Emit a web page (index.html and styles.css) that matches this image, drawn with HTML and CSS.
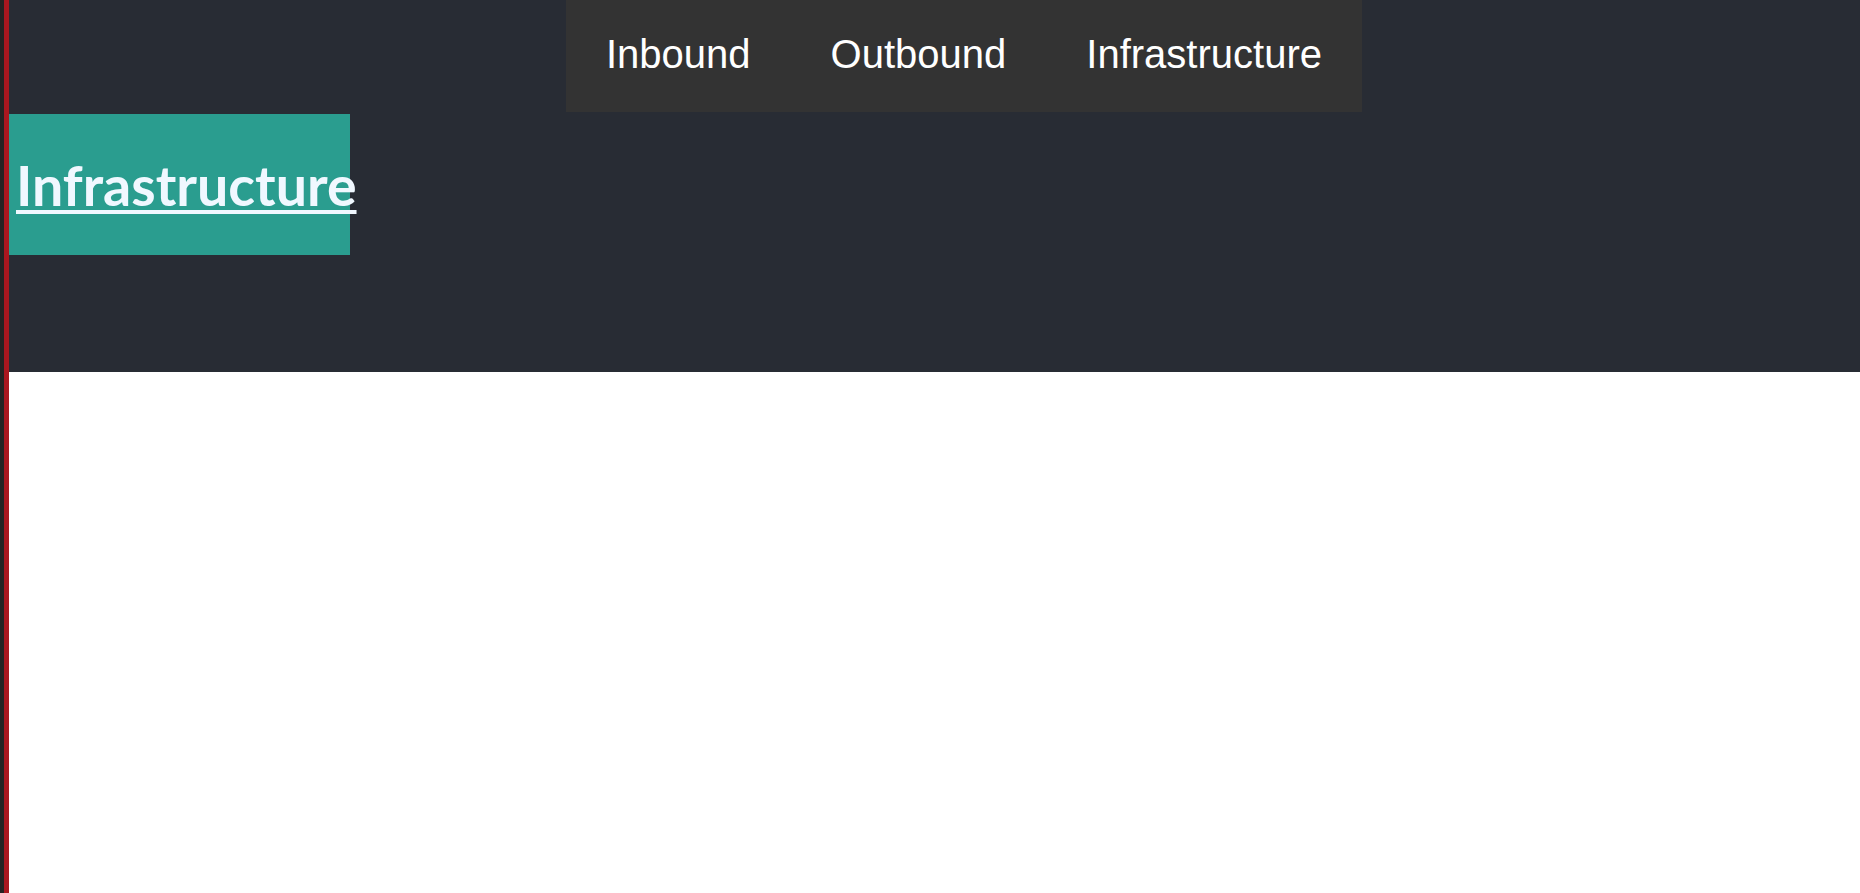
FILE: index.html
```html
<!DOCTYPE html>
<html lang="en">
<head>
<meta charset="utf-8">
<title>Infrastructure</title>
<link rel="stylesheet" href="styles.css">
</head>
<body>
<div class="frame">
  <div class="edge"></div>
  <div class="app">
    <header class="app-header">
      <nav class="topnav">
        <a class="topnav-link" href="#">Inbound</a>
        <a class="topnav-link" href="#">Outbound</a>
        <a class="topnav-link" href="#">Infrastructure</a>
      </nav>
      <div class="page-tag">
        <a class="page-title" href="#">Infrastructure</a>
      </div>
    </header>
    <main class="app-body"></main>
  </div>
</div>
</body>
</html>
```

FILE: styles.css
```css
html, body {
  margin: 0;
  padding: 0;
  height: 100%;
  background: #ffffff;
}

.frame {
  display: flex;
  min-height: 100vh;
}

.edge {
  width: 4px;
  flex: none;
  background: #232323;
  border-right: 5px solid #a9171f;
}

.app {
  flex: 1;
  display: flex;
  flex-direction: column;
}

.app-header {
  background: #282c34;
  height: 372px;
  display: flex;
  flex-direction: column;
  align-items: flex-start;
}

.topnav {
  margin-left: 557px;
  background: #333333;
  display: flex;
  height: 112px;
}

.topnav-link {
  font-family: "Liberation Sans", Arial, sans-serif;
  font-size: 40px;
  line-height: 46px;
  color: #ffffff;
  text-decoration: none;
  padding: 31px 40px 0;
}

.page-tag {
  margin-top: 2px;
  width: 341px;
  height: 141px;
  background: #2a9d8f;
  box-sizing: border-box;
  padding: 43px 0 0 7px;
  white-space: nowrap;
}

.page-title {
  font-family: Lato, "Open Sans", sans-serif;
  font-weight: 700;
  font-size: 55.5px;
  line-height: 56px;
  color: #f0f8ff;
  text-decoration: underline;
  text-decoration-thickness: 4px;
  text-underline-offset: 4px;
}

.app-body {
  flex: 1;
  background: #ffffff;
}
```
